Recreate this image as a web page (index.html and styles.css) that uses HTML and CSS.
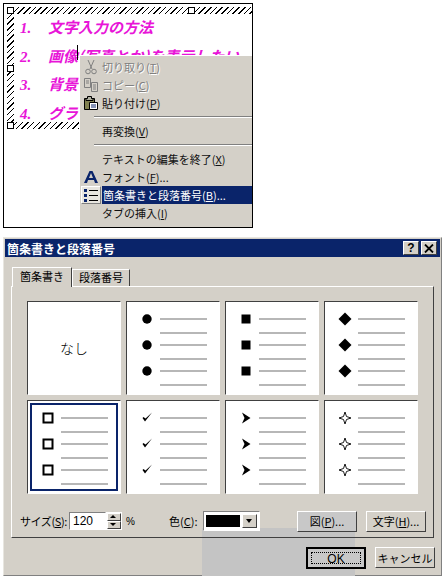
FILE: index.html
```html
<!DOCTYPE html>
<html lang="ja">
<head>
    <meta charset="UTF-8">
    <title>箇条書きと段落番号</title>
    <link rel="stylesheet" href="styles.css">
</head>
<body>
    <svg class="defs" width="0" height="0">
        <defs>
            <g id="lines">
                <path d="M33 17h47M33 31h47M33 43h47M33 57h47M33 69h47M33 83h47" stroke="#a0a0a0" stroke-width="1.4"/>
            </g>
            <g id="disc"><circle cx="20" cy="0" r="4.7"/></g>
            <g id="square"><rect x="15.5" y="-4.5" width="9" height="9"/></g>
            <g id="diamond"><path d="M20 -6.5L26.5 0L20 6.5L13.5 0Z"/></g>
            <g id="hollow"><rect x="15.5" y="-4.5" width="9" height="9" fill="#fff" stroke="#000" stroke-width="2"/></g>
            <g id="check"><path d="M15.500 0L18 3.500L25 -5.500L18.500 0.500L16.500 -1Z"/></g>
            <g id="arrow"><path d="M16 -5.500L24.500 0L16 5.500L18.500 0Z"/></g>
            <g id="star"><path d="M20 -6L21.500 -1.500L26 0L21.500 1.500L20 6L18.500 1.500L14 0L18.500 -1.500Z" fill="#fff" stroke="#000" stroke-width=".9"/></g>
        </defs>
    </svg>

    <div class="doc">
        <div class="textbox">
            <ol class="outline">
                <li><span class="num">1.</span>文字入力の方法</li>
                <li><span class="num">2.</span>画像(写真とか)を表示したい</li>
                <li><span class="num">3.</span>背景</li>
                <li><span class="num">4.</span>グラフ</li>
            </ol>
            <span class="handle h-top-left"></span>
            <span class="handle h-top-mid"></span>
            <span class="handle h-mid-left"></span>
            <span class="handle h-bot-left"></span>
        </div>
        <span class="caret"></span>

        <div class="menu">
            <div class="menu-item disabled">
                <span class="menu-icon">
                    <svg width="16" height="16" viewBox="0 0 16 16"><path d="M5 1l4 9M11 1L7 10" stroke="#808080" fill="none"/><circle cx="5" cy="12.500" r="2.300" fill="none" stroke="#808080"/><circle cx="11" cy="12.500" r="2.300" fill="none" stroke="#808080"/></svg>
                </span>
                <span>切り取り(<u>T</u>)</span>
            </div>
            <div class="menu-item disabled">
                <span class="menu-icon">
                    <svg width="16" height="16" viewBox="0 0 16 16"><path d="M1.500 1.500h6v9h-6zM8.500 5.500h6v9h-6z" fill="#d4d0c8" stroke="#808080"/><path d="M3 4h3M3 6h3M10 8h3M10 10h3M10 12h3" stroke="#808080"/></svg>
                </span>
                <span>コピー(<u>C</u>)</span>
            </div>
            <div class="menu-item">
                <span class="menu-icon">
                    <svg width="16" height="16" viewBox="0 0 16 16"><path d="M1.500 3.500h10v11h-10z" fill="#808050" stroke="#000"/><path d="M4.500 3.500v-2h4v2h1.500v2h-7v-2z" fill="#b0b0a0" stroke="#000"/><path d="M6.500 7.500h8v7h-8z" fill="#fff" stroke="#000"/><path d="M8 10h5M8 12h5" stroke="#0a246a"/></svg>
                </span>
                <span>貼り付け(<u>P</u>)</span>
            </div>
            <div class="menu-sep"></div>
            <div class="menu-item">
                <span class="menu-icon"></span>
                <span>再変換(<u>V</u>)</span>
            </div>
            <div class="menu-sep"></div>
            <div class="menu-item">
                <span class="menu-icon"></span>
                <span>テキストの編集を終了(<u>X</u>)</span>
            </div>
            <div class="menu-item">
                <span class="menu-icon">
                    <svg width="16" height="16" viewBox="0 0 16 16"><path d="M1 14h3l1-3h6l1 3h3L9.500 2h-3zM6 9l2-5 2 5z" fill="#0a246a" fill-rule="evenodd"/></svg>
                </span>
                <span>フォント(<u>F</u>)...</span>
            </div>
            <div class="menu-item active">
                <span class="menu-icon raised">
                    <svg width="16" height="16" viewBox="0 0 16 16"><path d="M1 2h3v3H1zM1 7h3v3H1zM1 12h3v3H1z" fill="#0a246a"/><path d="M6 3.500h9M6 8.500h9M6 13.500h9" stroke="#000"/></svg>
                </span>
                <span class="menu-label">箇条書きと段落番号(<u>B</u>)...</span>
            </div>
            <div class="menu-item">
                <span class="menu-icon"></span>
                <span>タブの挿入(<u>I</u>)</span>
            </div>
        </div>
    </div>

    <div class="dialog">
        <div class="patch"></div>
        <div class="titlebar">
            <span class="title">箇条書きと段落番号</span>
            <span class="title-btn help">?</span>
            <span class="title-btn close">
                <svg width="10" height="9" viewBox="0 0 10 9"><path d="M1 0.500l8 8M9 0.500l-8 8" stroke="#000" stroke-width="1.800"/></svg>
            </span>
        </div>

        <div class="tabs">
            <div class="tab current">箇条書き</div>
            <div class="tab">段落番号</div>
        </div>

        <div class="panel">
            <div class="bullet-grid">
                <div class="cell none">なし</div>
                <div class="cell"><svg viewBox="0 0 92 92"><use href="#lines"/><use href="#disc" y="17"/><use href="#disc" y="43"/><use href="#disc" y="69"/></svg></div>
                <div class="cell"><svg viewBox="0 0 92 92"><use href="#lines"/><use href="#square" y="17"/><use href="#square" y="43"/><use href="#square" y="69"/></svg></div>
                <div class="cell"><svg viewBox="0 0 92 92"><use href="#lines"/><use href="#diamond" y="17"/><use href="#diamond" y="43"/><use href="#diamond" y="69"/></svg></div>
                <div class="cell selected"><svg viewBox="0 0 92 92"><use href="#lines"/><use href="#hollow" y="17"/><use href="#hollow" y="43"/><use href="#hollow" y="69"/></svg></div>
                <div class="cell"><svg viewBox="0 0 92 92"><use href="#lines"/><use href="#check" y="17"/><use href="#check" y="43"/><use href="#check" y="69"/></svg></div>
                <div class="cell"><svg viewBox="0 0 92 92"><use href="#lines"/><use href="#arrow" y="17"/><use href="#arrow" y="43"/><use href="#arrow" y="69"/></svg></div>
                <div class="cell"><svg viewBox="0 0 92 92"><use href="#lines"/><use href="#star" y="17"/><use href="#star" y="43"/><use href="#star" y="69"/></svg></div>
            </div>

            <div class="options">
                <label class="size-label">サイズ(<u>S</u>):</label>
                <div class="size-input">120</div>
                <div class="spinner">
                    <span class="spin up"></span>
                    <span class="spin down"></span>
                </div>
                <span class="percent">%</span>
                <label class="color-label">色(<u>C</u>):</label>
                <div class="combo">
                    <span class="swatch"></span>
                    <span class="combo-arrow"></span>
                </div>
                <button class="btn picture">図(<u>P</u>)...</button>
                <button class="btn">文字(<u>H</u>)...</button>
            </div>
        </div>

        <div class="footer">
            <button class="btn default"><span class="focus">OK</span></button>
            <button class="btn">キャンセル</button>
        </div>
    </div>
</body>
</html>
```

FILE: styles.css
```css
* {
    margin: 0;
    padding: 0;
    box-sizing: border-box;
}

body {
    width: 448px;
    height: 583px;
    padding: 3px 0 0 3px;
    background: #fff;
    color: #000;
    font-family: "Noto Sans CJK JP", "Liberation Sans", sans-serif;
    font-size: 11px;
    overflow: hidden;
}

.defs {
    position: absolute;
}

u {
    text-decoration: underline;
}

/* document with the context menu */

.doc {
    position: relative;
    width: 250px;
    height: 225px;
    padding: 3px 0 0 3px;
    border: 1px solid #000;
    overflow: hidden;
}

.textbox {
    position: relative;
    height: 122px;
    padding: 7px 0 7px 7px;
    background: repeating-linear-gradient(135deg, #000 0, #000 1px, #fff 1px, #fff 4px);
}

.outline {
    height: 108px;
    padding-left: 6px;
    list-style: none;
    background: #fff;
    color: #e815d8;
    font-size: 15px;
    font-weight: bold;
    font-style: italic;
}

.outline li {
    height: 28.500px;
    line-height: 26px;
    white-space: nowrap;
}

.num {
    display: inline-block;
    width: 28px;
    font-family: "Liberation Serif", serif;
}

.handle {
    position: absolute;
    width: 7px;
    height: 7px;
    border: 1px solid #000;
    background: #fff;
}

.h-top-left { top: 0; left: 0; }
.h-top-mid { top: 0; left: 181px; }
.h-mid-left { top: 58px; left: 0; }
.h-bot-left { top: 115px; left: 0; }

.caret {
    position: absolute;
    top: 41px;
    left: 73px;
    width: 1px;
    height: 15px;
    background: #000;
}

.menu {
    position: absolute;
    top: 51px;
    left: 75px;
    width: 175px;
    height: 173px;
    padding: 2px 0 0 1px;
    background: #d4d0c8;
    border-top: 1px solid #fff;
    border-left: 1px solid #fff;
    border-bottom: 1px solid #404040;
    color: #111;
}

.menu-item {
    display: flex;
    align-items: center;
    height: 18px;
    white-space: nowrap;
}

.menu-icon {
    display: flex;
    justify-content: center;
    align-items: center;
    flex: none;
    width: 20px;
    height: 18px;
    margin-right: 1px;
}

.menu-icon.raised {
    background: #e8e6e0;
    border: 1px solid;
    border-color: #fff #808080 #808080 #fff;
}

.menu-item.disabled {
    color: #808080;
    text-shadow: 1px 1px 0 #fff;
}

.menu-item.active .menu-label {
    flex: 1;
    height: 18px;
    line-height: 18px;
    padding-left: 1px;
    background: #0a246a;
    color: #fff;
}

.menu-sep {
    height: 2px;
    margin: 4px 0 4px 13px;
    border-top: 1px solid #808080;
    border-bottom: 1px solid #fff;
}

/* bullets dialog */

.dialog {
    position: relative;
    width: 439px;
    height: 339px;
    margin-top: 9px;
    padding: 1px;
    background: #d4d0c8;
    border: 1px solid;
    border-color: #e8e6e0 #808080 #808080 #e8e6e0;
}

.patch {
    position: absolute;
    top: 290px;
    left: 198px;
    width: 153px;
    height: 48px;
    background: #c4c4c4;
}

.titlebar {
    position: relative;
    display: flex;
    align-items: center;
    height: 18px;
    padding: 0 3px 0 2px;
    background: #0a246a;
}

.title {
    flex: 1;
    color: #fff;
    font-size: 12px;
    font-weight: bold;
}

.title-btn {
    display: flex;
    justify-content: center;
    align-items: center;
    width: 16px;
    height: 14px;
    background: #d4d0c8;
    border: 1px solid;
    border-color: #fff #404040 #404040 #fff;
    font-family: "Liberation Sans", sans-serif;
    font-size: 12px;
    font-weight: bold;
}

.help {
    margin-right: 2px;
}

.tabs {
    position: relative;
    display: flex;
    align-items: flex-end;
    height: 29px;
    padding-left: 7px;
}

.tab {
    position: relative;
    width: 58px;
    height: 17px;
    line-height: 15px;
    text-align: center;
    border: 1px solid;
    border-color: #fff #404040 transparent #fff;
    border-bottom: 0;
}

.tab.current {
    z-index: 1;
    width: 60px;
    height: 20px;
    line-height: 16px;
    margin-bottom: -1px;
    background: #d4d0c8;
}

.panel {
    position: relative;
    width: 423px;
    height: 252px;
    margin-left: 6px;
    padding: 14px 0 0 15px;
    border: 1px solid;
    border-color: #fff #404040 #404040 #fff;
}

.bullet-grid {
    display: grid;
    grid-template-columns: repeat(4, 94px);
    grid-auto-rows: 94px;
    gap: 5px;
}

.cell {
    display: flex;
    justify-content: center;
    align-items: center;
    background: #fff;
    border: 1px solid;
    border-color: #404040 #fff #fff #404040;
}

.cell svg {
    display: block;
    width: 92px;
    height: 92px;
}

.cell.none {
    font-size: 14px;
    font-weight: 300;
}

.cell.selected {
    box-shadow: inset 0 0 0 2px #fff, inset 0 0 0 4px #0a246a;
}

.options {
    display: flex;
    align-items: center;
    height: 22px;
    margin-top: 16px;
    margin-left: -7px;
    white-space: nowrap;
}

.size-label {
    width: 49px;
    letter-spacing: -0.4px;
}

.size-input {
    width: 37px;
    height: 18px;
    padding-left: 3px;
    line-height: 16px;
    background: #fff;
    border: 1px solid;
    border-color: #808080 #fff #fff #808080;
    font-family: "Liberation Sans", sans-serif;
    font-size: 12px;
}

.spinner {
    display: flex;
    flex-direction: column;
    width: 16px;
    height: 18px;
    background: #fff;
    padding: 1px;
}

.spin {
    position: relative;
    flex: 1;
    background: #d4d0c8;
    border: 1px solid;
    border-color: #fff #404040 #404040 #fff;
}

.spin::after {
    content: '';
    position: absolute;
    top: 1px;
    left: 2px;
    border-left: 3px solid transparent;
    border-right: 3px solid transparent;
}

.spin.up::after {
    border-bottom: 3px solid #000;
}

.spin.down::after {
    border-top: 3px solid #000;
}

.percent {
    width: 43px;
    margin-left: 4px;
    font-family: "Liberation Sans", sans-serif;
    font-size: 10px;
}

.color-label {
    width: 34px;
}

.combo {
    display: flex;
    align-items: center;
    gap: 2px;
    width: 57px;
    height: 20px;
    padding: 2px;
    background: #fff;
    border: 1px solid;
    border-color: #808080 #fff #fff #808080;
}

.swatch {
    width: 33px;
    height: 12px;
    flex: 1;
    background: #000;
    border: 1px solid #000;
}

.combo-arrow {
    position: relative;
    width: 15px;
    height: 14px;
    background: #d4d0c8;
    border: 1px solid;
    border-color: #fff #404040 #404040 #fff;
}

.combo-arrow::after {
    content: '';
    position: absolute;
    top: 4px;
    left: 3px;
    border-left: 3px solid transparent;
    border-right: 3px solid transparent;
    border-top: 4px solid #000;
}

.btn {
    width: 60px;
    height: 21px;
    background: #d4d0c8;
    border: 1px solid;
    border-color: #fff #404040 #404040 #fff;
    color: #000;
    font-family: inherit;
    font-size: 11px;
}

.btn.picture {
    margin-left: 37px;
    margin-right: 9px;
    background: #c8c8c8;
}

.footer {
    position: relative;
    display: flex;
    justify-content: flex-end;
    gap: 9px;
    margin-top: 9px;
    padding-right: 5px;
}

.btn.default {
    height: 22px;
    padding: 3px;
    background: #c8c8c8;
    border: 2px solid #000;
}

.focus {
    display: block;
    height: 100%;
    line-height: 12px;
    border: 1px dotted #000;
    font-family: "Liberation Sans", sans-serif;
    font-size: 12px;
}
```
